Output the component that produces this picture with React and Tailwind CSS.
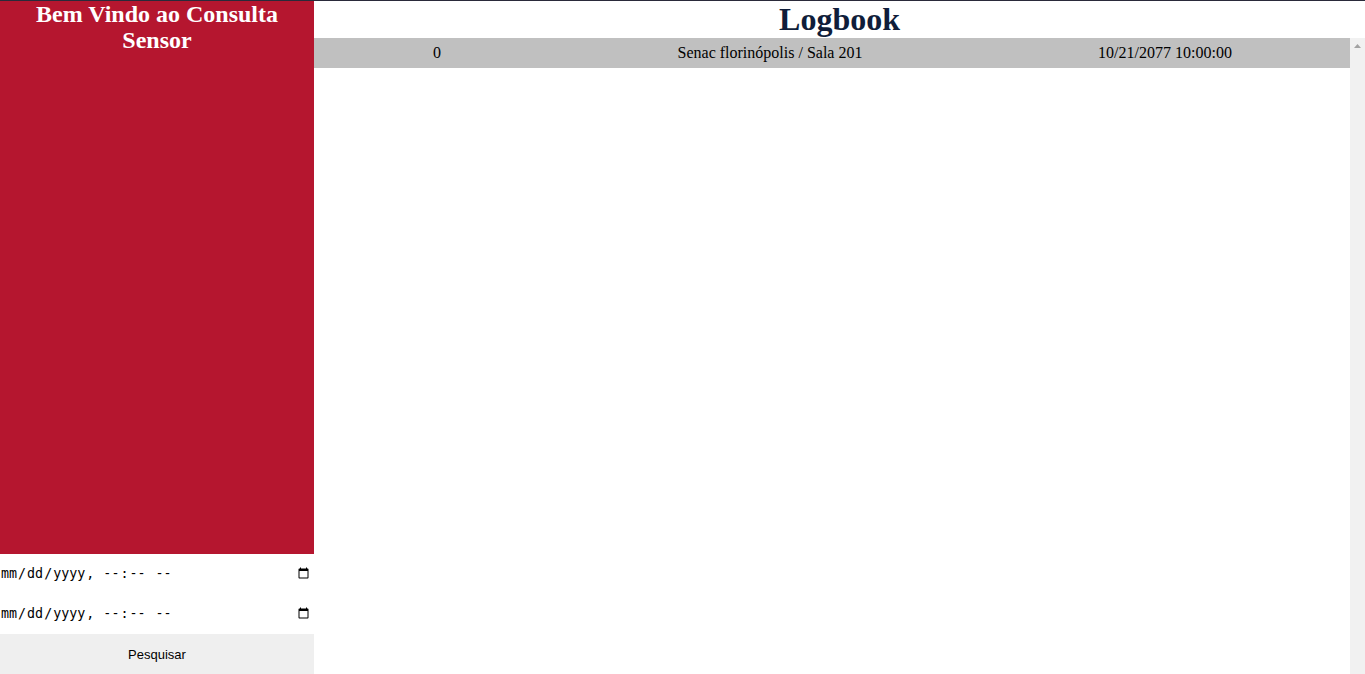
import React from "react";

export default function App() {
  return (
    <div className="w-[1365px] h-[674px] overflow-hidden border-t border-[#2a2a3a] bg-white font-['Liberation_Serif',serif]">
      <div className="flex h-[673px]">
        <aside className="w-[314px] flex flex-col shrink-0">
          <div className="flex-1 bg-[#b5162f]">
            <h2 className="text-center text-white font-bold text-[24px] leading-[26px]">
              Bem Vindo ao Consulta Sensor
            </h2>
          </div>
          <input
            type="datetime-local"
            className="block w-full h-10 bg-white text-black border-0 outline-none py-0 pl-0 pr-[2px] font-['DejaVu_Sans_Mono',monospace] text-[13.3333px]"
          />
          <input
            type="datetime-local"
            className="block w-full h-10 bg-white text-black border-0 outline-none py-0 pl-0 pr-[2px] font-['DejaVu_Sans_Mono',monospace] text-[13.3333px]"
          />
          <button className="w-full h-10 bg-[#efefef] text-black pt-[2px] font-['Liberation_Sans',Arial,sans-serif] text-[13px]">
            Pesquisar
          </button>
        </aside>
        <main className="flex-1 flex flex-col min-w-0">
          <h1 className="text-center font-bold text-[32px] leading-[37px] text-[#0f1d3a]">Logbook</h1>
          <div className="flex-1 flex min-h-0">
            <div className="flex-1">
              <div className="grid grid-cols-[246px_420px_370px] h-[30px] bg-[#c0c0c0] items-center text-center text-[16px] text-black">
                <div>0</div>
                <div>Senac florinópolis / Sala 201</div>
                <div>10/21/2077 10:00:00</div>
              </div>
            </div>
            <div className="w-[15px] bg-[#f1f1f1] flex justify-center pt-[6px]">
              <svg width="7" height="4" viewBox="0 0 7 4"><path d="M0 4 L3.5 0 L7 4 Z" fill="#a3a3a3" /></svg>
            </div>
          </div>
        </main>
      </div>
    </div>
  );
}
